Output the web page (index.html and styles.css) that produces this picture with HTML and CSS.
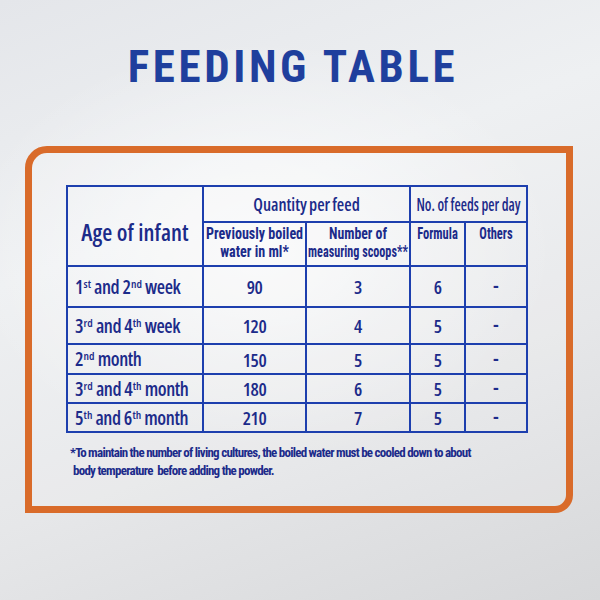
FILE: index.html
```html
<!DOCTYPE html>
<html lang="en">
<head>
<meta charset="utf-8">
<title>Feeding Table</title>
<link rel="stylesheet" href="styles.css">
</head>
<body>
<main class="page">
  <h1 class="title">FEEDING TABLE</h1>
  <section class="frame">
    <table class="feed">
      <colgroup>
        <col class="c-age"><col class="c-water"><col class="c-scoops"><col class="c-formula"><col class="c-others">
      </colgroup>
      <thead>
        <tr class="r-h1">
          <th rowspan="2" class="age-head">Age of infant</th>
          <th colspan="2" class="group">Quantity per feed</th>
          <th colspan="2" class="group group-no"><span class="ln sx84">No. of feeds per day</span></th>
        </tr>
        <tr class="r-h2">
          <th class="sub"><span class="ln sx88">Previously boiled</span><span class="ln sx88">water in ml*</span></th>
          <th class="sub"><span class="ln sx86">Number of</span><span class="ln sx76">measuring scoops**</span></th>
          <th class="sub"><span class="ln sx78">Formula</span></th>
          <th class="sub"><span class="ln sx78">Others</span></th>
        </tr>
      </thead>
      <tbody>
        <tr class="r1">
          <td class="age">1<sup>st</sup> and 2<sup>nd</sup> week</td>
          <td class="num">90</td><td class="num">3</td><td class="num">6</td><td class="dash">-</td>
        </tr>
        <tr class="r2">
          <td class="age">3<sup>rd</sup> and 4<sup>th</sup> week</td>
          <td class="num">120</td><td class="num">4</td><td class="num">5</td><td class="dash">-</td>
        </tr>
        <tr class="r3">
          <td class="age">2<sup>nd</sup> month</td>
          <td class="num">150</td><td class="num">5</td><td class="num">5</td><td class="dash">-</td>
        </tr>
        <tr class="r4">
          <td class="age">3<sup>rd</sup> and 4<sup>th</sup> month</td>
          <td class="num">180</td><td class="num">6</td><td class="num">5</td><td class="dash">-</td>
        </tr>
        <tr class="r5">
          <td class="age">5<sup>th</sup> and 6<sup>th</sup> month</td>
          <td class="num">210</td><td class="num">7</td><td class="num">5</td><td class="dash">-</td>
        </tr>
      </tbody>
    </table>
    <p class="note">*To maintain the number of living cultures, the boiled water must be cooled down to about<br>body temperature&nbsp; before adding the powder.</p>
  </section>
</main>
</body>
</html>
```
FILE: styles.css
```css
html, body {
  margin: 0;
  padding: 0;
}
body {
  width: 600px;
  height: 600px;
  overflow: hidden;
  background:
    radial-gradient(ellipse 420px 300px at 260px 250px, rgba(255,255,255,0.75), rgba(255,255,255,0) 70%),
    linear-gradient(160deg, #e4e6ea 0%, #eef0f2 35%, #e6e7e9 65%, #d7d8da 100%);
  font-family: "Roboto", "Liberation Sans", sans-serif;
  font-stretch: condensed;
  color: #1c2b8a;
}
.page {
  padding-top: 44px;
}
.title {
  margin: 0 14px 0 0;
  text-align: center;
  font-size: 45px;
  line-height: 45px;
  font-weight: 700;
  letter-spacing: 3.6px;
  color: #1f3f9d;
}
.frame {
  margin: 57px 0 0 25px;
  width: 548px;
  height: 367px;
  box-sizing: border-box;
  border: 7px solid #d96b2a;
  border-radius: 22px 0 18px 0;
  padding: 32px 0 0 34px;
  background: rgba(255,255,255,0.12);
}
.feed {
  border-collapse: collapse;
  table-layout: fixed;
  width: 462px;
}
.c-age { width: 136px; }
.c-water { width: 103px; }
.c-scoops { width: 104px; }
.c-formula { width: 55px; }
.c-others { width: 62px; }
.feed th, .feed td {
  border: 2px solid #1d3fae;
  padding: 0;
  text-align: center;
  vertical-align: middle;
  color: #1c2b8a;
  white-space: nowrap;
}
.feed .r-h1 { height: 36px; }
.feed .r-h2 { height: 44px; }
.feed .r1 { height: 41px; }
.feed .r2 { height: 37px; }
.feed .r3 { height: 30px; }
.feed .r4, .feed .r5 { height: 29px; }
.feed .age-head,
.feed .group,
.feed .age,
.feed .num {
  font-family: "Open Sans", "Roboto", sans-serif;
  font-stretch: 75%;
  font-weight: 600;
}
.feed .age-head {
  font-size: 23px;
  padding-top: 12px;
  letter-spacing: 0.1px;
}
.feed .group {
  font-size: 17px;
  word-spacing: -1px;
}
.feed .group-no {
  word-spacing: 0;
}
.feed .sub {
  vertical-align: top;
  font-size: 16px;
  line-height: 18px;
  font-weight: 700;
  padding-top: 2px;
}
.ln {
  display: block;
  margin: 0 -40px;
  transform-origin: 50% 50%;
}
.sx88 { transform: scaleX(0.88); }
.sx86 { transform: scaleX(0.86); }
.sx84 { transform: scaleX(0.84); }
.sx78 { transform: scaleX(0.78); }
.sx76 { transform: scaleX(0.76); }
.feed .age {
  text-align: left;
  padding-left: 7px;
  font-size: 19px;
  letter-spacing: -0.4px;
}
.age sup {
  font-size: 11.5px;
  vertical-align: 6px;
  line-height: 0;
  letter-spacing: 0;
  margin-left: 0.5px;
}
.feed .num {
  font-size: 18.5px;
  letter-spacing: -0.5px;
}
.feed .dash {
  font-size: 19px;
  font-weight: 700;
}
.note {
  margin: 11px 0 0 4px;
  padding-left: 3px;
  text-indent: -3px;
  font-size: 13px;
  line-height: 18px;
  font-weight: 700;
  letter-spacing: -0.75px;
  color: #1c2b8a;
  white-space: nowrap;
}
```
